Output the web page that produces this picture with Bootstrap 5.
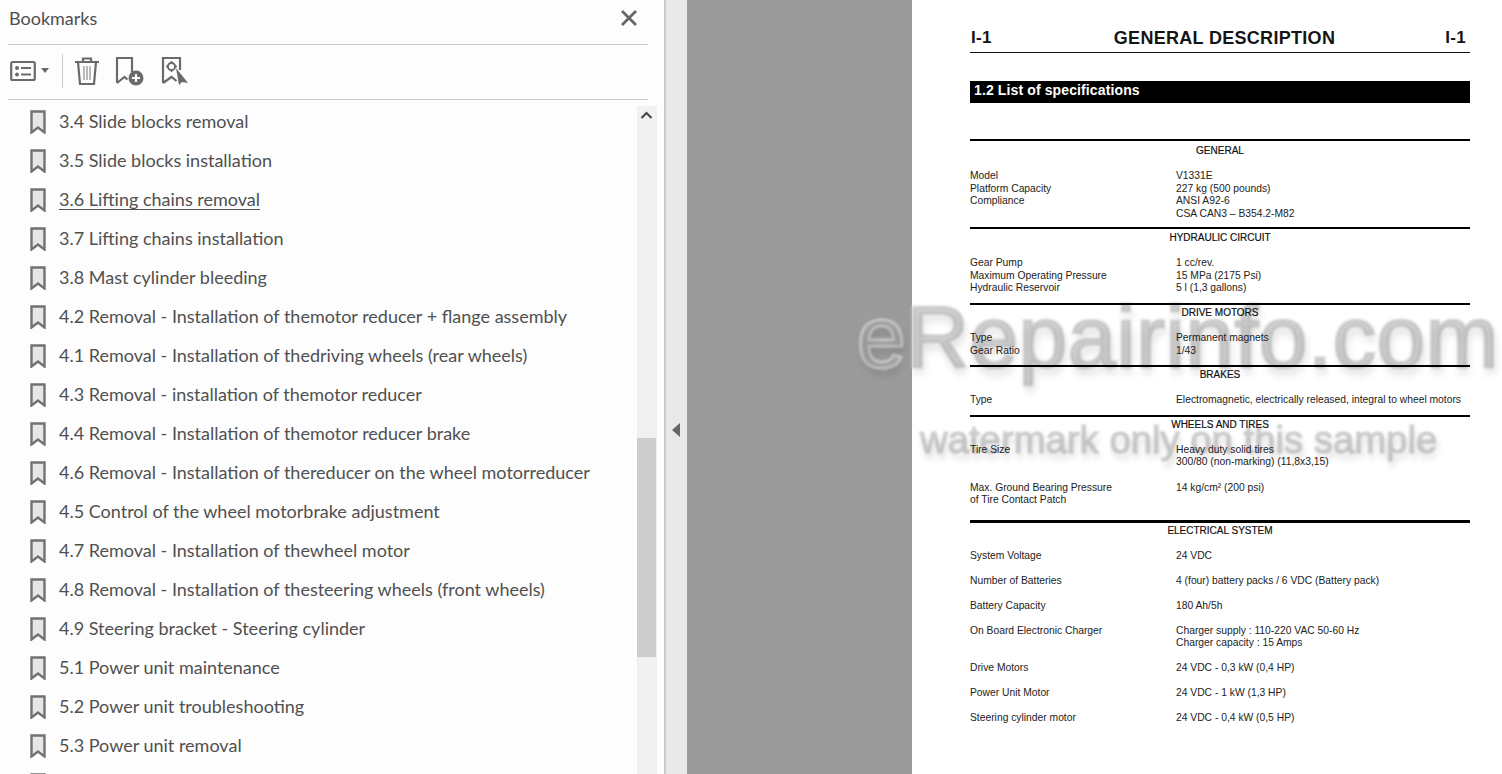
<!DOCTYPE html>
<html lang="en">
<head>
  <meta charset="UTF-8" />
  <meta name="viewport" content="width=device-width, initial-scale=1" />
  <title>Bookmarks</title>
  <link href="https://cdn.jsdelivr.net/npm/bootstrap@5.3.3/dist/css/bootstrap.min.css" rel="stylesheet" />
  <style>
    body { height: 774px; overflow: hidden; background: #fff; font-family: "Lato", "Liberation Sans", sans-serif; color: #505050; }
    .bm-panel { width: 664px; height: 774px; background: #fdfdfd; flex: none; }
    .bm-head { height: 45px; margin: 0 16px 0 8px; border-bottom: 1px solid #ccc; padding-bottom: 8px; }
    .bm-head span { font-size: 18px; margin-left: 1px; }
    .bm-close { margin-right: 9px; }
    .bm-tools { height: 55px; margin: 0 16px 0 8px; border-bottom: 1px solid #ccc; padding: 0 0 3px 2px; }
    .bm-sep { width: 1px; height: 34px; background: #ccc; margin: 0 11px 0 12px; }
    .bm-tools svg { display: block; }
    .bm-add { margin-left: 15px; }
    .bm-find { margin-left: 16px; }
    .bm-list { height: 674px; overflow: hidden; padding-top: 2px; }
    .bm-rows { width: 637px; flex: none; }
    .bm-row { height: 39px; padding-left: 30px; font-size: 18px; gap: 13px; white-space: nowrap; }
    .bm-row svg { flex: none; }
    .bm-row u { text-underline-offset: 3px; text-decoration-thickness: 1px; }
    .bm-scroll { width: 20px; height: 668px; margin-top: 4px; background: #f1f1f1; position: relative; flex: none; }
    .bm-thumb { position: absolute; left: 0; top: 332px; width: 19px; height: 219px; background: #cdcdcd; }
    .bm-up { position: absolute; left: 3px; top: 5px; }
    .split-bar { width: 23px; height: 774px; flex: none; background: #e9e9e9; border-left: 2px solid #cbcbcb; padding-top: 422px; padding-left: 5px; }
    .split-bar svg { display: block; }
    .doc-gray { width: 225px; height: 774px; background: #9b9b9b; flex: none; }
    .doc-page { width: 590px; height: 774px; padding: 27px 32px 0 58px; background: #fff; flex: none; font-family: "Liberation Sans", Arial, sans-serif; color: #222; }
    .doc-title { height: 26px; border-bottom: 1px solid #111; font-weight: 700; font-size: 18px; line-height: 22px; color: #151515; letter-spacing: .3px; padding: 0 4px 0 1px; }
    .doc-title span:nth-child(2) { margin-left: 12px; }
    .doc-title span:first-child, .doc-title span:last-child { font-size: 17px; }
    .doc-bar { margin-top: 28px; height: 22px; background: #000; color: #fff; font-weight: 700; font-size: 14px; line-height: 19px; letter-spacing: .12px; padding-left: 4px; }
    .doc-specs { margin-top: 36px; position: relative; z-index: 2; }
    .spec-sec { border-top: 2px solid #000; padding: 2px 0 8px; font-size: 10.3px; line-height: 12.5px; }
    .spec-sec:first-child { padding: 4px 0 7px; }
    .spec-sec:nth-child(2) { padding: 3px 0 8.5px; }
    .spec-sec:nth-child(4) .spec-block:first-of-type { margin-top: 14px; }
    .spec-sec:nth-child(5) { padding-bottom: 13px; }
    .spec-sec:last-child { border-top-width: 3px; }
    .spec-name { text-align: center; font-size: 10px; line-height: 12px; color: #111; -webkit-text-stroke: .2px #111; }
    .spec-block { margin-top: 13px; }
    .spec-lab { width: 206px; flex: none; }
    .spec-sec:last-child .spec-block + .spec-block { margin-top: 12.5px; }
    .mark-big, .mark-small { position: absolute; z-index: 1; white-space: nowrap; font-family: "Liberation Sans", Arial, sans-serif; color: rgba(165,165,165,.5); -webkit-text-stroke: 3px rgba(218,218,218,.85); paint-order: stroke fill; filter: blur(.8px); pointer-events: none; }
    .mark-big { left: 857px; top: 285px; font-size: 87.5px; line-height: 105px; letter-spacing: .3px; text-shadow: 2px 7px 8px rgba(0,0,0,.14); }
    .mark-small { left: 920px; top: 418px; font-size: 38.3px; line-height: 44px; -webkit-text-stroke-width: 1.5px; text-shadow: 2px 6px 6px rgba(0,0,0,.16); }
  </style>
</head>
<body class="position-relative">
  <svg width="0" height="0" class="position-absolute">
    <symbol id="bm-mark" viewBox="0 0 16 24">
      <path d="M1.5 1.5h13v21l-6.5-5-6.5 5z" fill="#e6e6e6" stroke="#727272" stroke-width="2.4" stroke-linejoin="miter" />
    </symbol>
  </svg>

  <div class="d-flex">
    <div class="bm-panel">
      <div class="bm-head d-flex align-items-center justify-content-between">
        <span>Bookmarks</span>
        <svg class="bm-close" width="20" height="20" viewBox="0 0 20 20"><path d="M3 3l14 14M17 3L3 17" stroke="#666" stroke-width="2.8" fill="none" /></svg>
      </div>

      <div class="bm-tools d-flex align-items-center">
        <svg width="26" height="22" viewBox="0 0 26 22"><rect x="1.2" y="2" width="23.6" height="18" rx="1.5" fill="none" stroke="#6a6a6a" stroke-width="2.2" /><circle cx="7" cy="8" r="2" fill="#6a6a6a" /><circle cx="7" cy="14.5" r="2" fill="#6a6a6a" /><path d="M11 8h10M11 14.5h10" stroke="#6a6a6a" stroke-width="2.2" /></svg>
        <svg class="ms-1" width="10" height="6" viewBox="0 0 10 6"><path d="M1 0h8L5 5z" fill="#6a6a6a" /></svg>
        <span class="bm-sep"></span>
        <svg width="26" height="30" viewBox="0 0 26 30"><path d="M1 6h24M9 6V2.5h8V6M4 6l2 22h14l2-22" fill="none" stroke="#6a6a6a" stroke-width="2.2" /><path d="M10 10v14M13 10v14M16 10v14" stroke="#8c8c8c" stroke-width="1.2" /></svg>
        <svg class="bm-add" width="30" height="30" viewBox="0 0 30 30"><path d="M2 27V2h15v14M2 27l7.5-6 3 2.5" fill="none" stroke="#6a6a6a" stroke-width="2.2" /><circle cx="21" cy="22" r="7.5" fill="#6a6a6a" /><path d="M17 22h8M21 18v8" stroke="#fff" stroke-width="2.2" /></svg>
        <svg class="bm-find" width="28" height="30" viewBox="0 0 28 30"><path d="M2 27V2h17v12M2 27l8.5-6 5 4" fill="none" stroke="#6a6a6a" stroke-width="2.2" /><circle cx="10.5" cy="10.5" r="3.6" fill="none" stroke="#6a6a6a" stroke-width="2" /><path d="M10.5 5v2M10.5 14v2M5 10.5h2M14 10.5h2" stroke="#6a6a6a" stroke-width="1.6" /><path d="M15 12l12 15-6-1-3 3z" fill="#6a6a6a" /></svg>
      </div>

      <div class="bm-list d-flex">
        <div class="bm-rows">
          <div class="bm-row d-flex align-items-center"><svg width="16" height="24"><use href="#bm-mark" /></svg><span>3.4 Slide blocks removal</span></div>
          <div class="bm-row d-flex align-items-center"><svg width="16" height="24"><use href="#bm-mark" /></svg><span>3.5 Slide blocks installation</span></div>
          <div class="bm-row d-flex align-items-center"><svg width="16" height="24"><use href="#bm-mark" /></svg><u>3.6 Lifting chains removal</u></div>
          <div class="bm-row d-flex align-items-center"><svg width="16" height="24"><use href="#bm-mark" /></svg><span>3.7 Lifting chains installation</span></div>
          <div class="bm-row d-flex align-items-center"><svg width="16" height="24"><use href="#bm-mark" /></svg><span>3.8 Mast cylinder bleeding</span></div>
          <div class="bm-row d-flex align-items-center"><svg width="16" height="24"><use href="#bm-mark" /></svg><span>4.2 Removal - Installation of themotor reducer + flange assembly</span></div>
          <div class="bm-row d-flex align-items-center"><svg width="16" height="24"><use href="#bm-mark" /></svg><span>4.1 Removal - Installation of thedriving wheels (rear wheels)</span></div>
          <div class="bm-row d-flex align-items-center"><svg width="16" height="24"><use href="#bm-mark" /></svg><span>4.3 Removal - installation of themotor reducer</span></div>
          <div class="bm-row d-flex align-items-center"><svg width="16" height="24"><use href="#bm-mark" /></svg><span>4.4 Removal - Installation of themotor reducer brake</span></div>
          <div class="bm-row d-flex align-items-center"><svg width="16" height="24"><use href="#bm-mark" /></svg><span>4.6 Removal - Installation of thereducer on the wheel motorreducer</span></div>
          <div class="bm-row d-flex align-items-center"><svg width="16" height="24"><use href="#bm-mark" /></svg><span>4.5 Control of the wheel motorbrake adjustment</span></div>
          <div class="bm-row d-flex align-items-center"><svg width="16" height="24"><use href="#bm-mark" /></svg><span>4.7 Removal - Installation of thewheel motor</span></div>
          <div class="bm-row d-flex align-items-center"><svg width="16" height="24"><use href="#bm-mark" /></svg><span>4.8 Removal - Installation of thesteering wheels (front wheels)</span></div>
          <div class="bm-row d-flex align-items-center"><svg width="16" height="24"><use href="#bm-mark" /></svg><span>4.9 Steering bracket - Steering cylinder</span></div>
          <div class="bm-row d-flex align-items-center"><svg width="16" height="24"><use href="#bm-mark" /></svg><span>5.1 Power unit maintenance</span></div>
          <div class="bm-row d-flex align-items-center"><svg width="16" height="24"><use href="#bm-mark" /></svg><span>5.2 Power unit troubleshooting</span></div>
          <div class="bm-row d-flex align-items-center"><svg width="16" height="24"><use href="#bm-mark" /></svg><span>5.3 Power unit removal</span></div>
          <div class="bm-row d-flex align-items-center"><svg width="16" height="24"><use href="#bm-mark" /></svg></div>
        </div>
        <div class="bm-scroll">
          <svg class="bm-up" width="13" height="9" viewBox="0 0 13 9"><path d="M1.5 7l5-5 5 5" fill="none" stroke="#444" stroke-width="2" /></svg>
          <div class="bm-thumb"></div>
        </div>
      </div>
    </div>

    <div class="split-bar">
      <svg width="10" height="16" viewBox="0 0 10 16"><path d="M9 1v14L1 8z" fill="#666" /></svg>
    </div>
    <div class="doc-gray"></div>

    <div class="doc-page">
      <div class="doc-title d-flex justify-content-between">
        <span>I-1</span><span>GENERAL DESCRIPTION</span><span>I-1</span>
      </div>
      <div class="doc-bar">1.2 List of specifications</div>

      <div class="doc-specs">
        <div class="spec-sec">
          <div class="spec-name">GENERAL</div>
          <div class="spec-block">
            <div class="d-flex"><div class="spec-lab">Model</div><div>V1331E</div></div>
            <div class="d-flex"><div class="spec-lab">Platform Capacity</div><div>227 kg (500 pounds)</div></div>
            <div class="d-flex"><div class="spec-lab">Compliance</div><div>ANSI A92-6<br />CSA CAN3 – B354.2-M82</div></div>
          </div>
        </div>
        <div class="spec-sec">
          <div class="spec-name">HYDRAULIC CIRCUIT</div>
          <div class="spec-block">
            <div class="d-flex"><div class="spec-lab">Gear Pump</div><div>1 cc/rev.</div></div>
            <div class="d-flex"><div class="spec-lab">Maximum Operating Pressure</div><div>15 MPa (2175 Psi)</div></div>
            <div class="d-flex"><div class="spec-lab">Hydraulic Reservoir</div><div>5 l (1,3 gallons)</div></div>
          </div>
        </div>
        <div class="spec-sec">
          <div class="spec-name">DRIVE MOTORS</div>
          <div class="spec-block">
            <div class="d-flex"><div class="spec-lab">Type</div><div>Permanent magnets</div></div>
            <div class="d-flex"><div class="spec-lab">Gear Ratio</div><div>1/43</div></div>
          </div>
        </div>
        <div class="spec-sec">
          <div class="spec-name">BRAKES</div>
          <div class="spec-block">
            <div class="d-flex"><div class="spec-lab">Type</div><div>Electromagnetic, electrically released, integral to wheel motors</div></div>
          </div>
        </div>
        <div class="spec-sec">
          <div class="spec-name">WHEELS AND TIRES</div>
          <div class="spec-block">
            <div class="d-flex"><div class="spec-lab">Tire Size</div><div>Heavy duty solid tires<br />300/80 (non-marking) (11,8x3,15)</div></div>
          </div>
          <div class="spec-block">
            <div class="d-flex"><div class="spec-lab">Max. Ground Bearing Pressure<br />of Tire Contact Patch</div><div>14 kg/cm² (200 psi)</div></div>
          </div>
        </div>
        <div class="spec-sec">
          <div class="spec-name">ELECTRICAL SYSTEM</div>
          <div class="spec-block"><div class="d-flex"><div class="spec-lab">System Voltage</div><div>24 VDC</div></div></div>
          <div class="spec-block"><div class="d-flex"><div class="spec-lab">Number of Batteries</div><div>4 (four) battery packs / 6 VDC (Battery pack)</div></div></div>
          <div class="spec-block"><div class="d-flex"><div class="spec-lab">Battery Capacity</div><div>180 Ah/5h</div></div></div>
          <div class="spec-block"><div class="d-flex"><div class="spec-lab">On Board Electronic Charger</div><div>Charger supply : 110-220 VAC 50-60 Hz<br />Charger capacity : 15 Amps</div></div></div>
          <div class="spec-block"><div class="d-flex"><div class="spec-lab">Drive Motors</div><div>24 VDC - 0,3 kW (0,4 HP)</div></div></div>
          <div class="spec-block"><div class="d-flex"><div class="spec-lab">Power Unit Motor</div><div>24 VDC - 1 kW (1,3 HP)</div></div></div>
          <div class="spec-block"><div class="d-flex"><div class="spec-lab">Steering cylinder motor</div><div>24 VDC - 0,4 kW (0,5 HP)</div></div></div>
        </div>
      </div>
    </div>
  </div>

  <div class="mark-big">eRepairinfo.com</div>
  <div class="mark-small">watermark only on this sample</div>

  <script src="https://cdn.jsdelivr.net/npm/bootstrap@5.3.3/dist/js/bootstrap.bundle.min.js"></script>
</body>
</html>
